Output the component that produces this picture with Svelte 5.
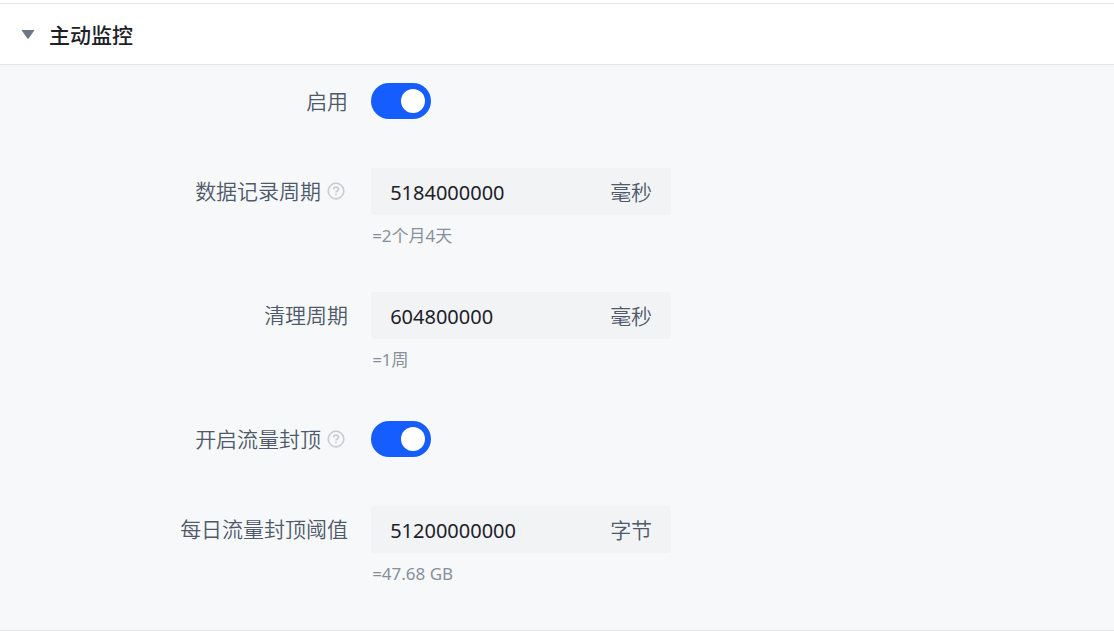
<script>
  let open = $state(true);
  let fields = $state([
    { id: 'enabled', label: '启用', type: 'switch', value: true },
    { id: 'record-period', label: '数据记录周期', type: 'number', value: '5184000000', unit: '毫秒', hint: '=2个月4天', help: true },
    { id: 'clean-period', label: '清理周期', type: 'number', value: '604800000', unit: '毫秒', hint: '=1周' },
    { id: 'traffic-cap', label: '开启流量封顶', type: 'switch', value: true, help: true },
    { id: 'daily-cap', label: '每日流量封顶阈值', type: 'number', value: '51200000000', unit: '字节', hint: '=47.68 GB' }
  ]);
</script>

<section class="panel">
  <button class="header" type="button" aria-expanded={open} onclick={() => (open = !open)}>
    <svg class="caret" class:closed={!open} viewBox="0 0 14 10" aria-hidden="true">
      <path d="M0.4 1H13.6L7.6 9.5Q7 10.2 6.4 9.5Z" fill="#6b7785" />
    </svg>
    <span>主动监控</span>
  </button>

  {#if open}
    <form class="body">
      {#each fields as field (field.id)}
        <div class="row">
          <div class="label">
            <label for={field.id}>{field.label}</label>
            {#if field.help}
              <svg class="help" viewBox="0 0 18 18" fill="none" stroke="#c9cdd4" stroke-width="1.7" aria-hidden="true">
                <circle cx="9" cy="9" r="7.8" />
                <path d="M6.6 7.4C6.6 6 7.6 5.1 9 5.1S11.4 6 11.4 7.2C11.4 8.7 9 8.8 9 10.6" />
                <path d="M9 11.7V13.3" />
              </svg>
            {/if}
          </div>
          <div class="control">
            {#if field.type === 'switch'}
              <div class="line">
                <input class="switch" id={field.id} type="checkbox" role="switch" bind:checked={field.value} />
              </div>
            {:else}
              <div class="box">
                <input class="number" id={field.id} type="text" inputmode="numeric" bind:value={field.value} />
                <span class="unit">{field.unit}</span>
              </div>
              <div class="hint">{field.hint}</div>
            {/if}
          </div>
        </div>
      {/each}
    </form>
  {/if}
</section>

<style>
  :global(body) {
    margin: 0;
    background: #fff;
  }

  .panel {
    margin-top: 3px;
    border-top: 1px solid #e5e6eb;
    border-bottom: 1px solid #e5e6eb;
    font-family: 'Noto Sans', 'Noto Sans CJK SC', sans-serif;
    font-size: 21px;
    color: #4e5969;
  }

  .header {
    display: flex;
    align-items: center;
    gap: 14px;
    box-sizing: border-box;
    width: 100%;
    height: 61px;
    padding: 0 21px;
    border: 0;
    border-bottom: 1px solid #e5e6eb;
    background: #fff;
    color: #1d2129;
    font: inherit;
    font-weight: 500;
    text-align: left;
    cursor: pointer;
  }

  .caret {
    width: 14px;
    height: 10px;
  }

  .caret.closed {
    transform: rotate(-90deg);
  }

  .body {
    display: flex;
    flex-direction: column;
    gap: 44px;
    padding: 13px 0 44px;
    background: #f7f8fa;
  }

  .row {
    display: flex;
    align-items: flex-start;
    gap: 23px;
  }

  .label {
    display: flex;
    align-items: center;
    justify-content: flex-end;
    box-sizing: border-box;
    flex: 0 0 31.25%;
    height: 46px;
    white-space: nowrap;
  }

  .label label,
  .unit {
    padding-bottom: 2px;
    font-weight: 350;
  }

  .help {
    width: 18px;
    height: 18px;
    margin: 0 3px 0 6px;
  }

  .control {
    flex: 0 1 300px;
    min-width: 0;
  }

  .line {
    display: flex;
    align-items: center;
    height: 46px;
  }

  .switch {
    appearance: none;
    display: flex;
    align-items: center;
    box-sizing: border-box;
    width: 60px;
    height: 36px;
    margin: 0;
    padding: 0 6px;
    border-radius: 18px;
    background: #c9cdd4;
    cursor: pointer;
  }

  .switch::before {
    content: '';
    width: 24px;
    height: 24px;
    border-radius: 50%;
    background: #fff;
  }

  .switch:checked {
    justify-content: flex-end;
    background: #165dff;
  }

  .box {
    display: flex;
    align-items: center;
    gap: 12px;
    box-sizing: border-box;
    height: 47px;
    padding: 0 19px;
    border-radius: 3px;
    background: #f2f3f5;
  }

  .number {
    flex: 1;
    min-width: 0;
    padding: 1px 0 0;
    border: 0;
    outline: 0;
    background: transparent;
    color: #1d2129;
    font: inherit;
    font-size: 20px;
  }

  .hint {
    height: 33px;
    padding: 0 1px;
    line-height: 41px;
    font-size: 17px;
    color: #86909c;
  }
</style>
